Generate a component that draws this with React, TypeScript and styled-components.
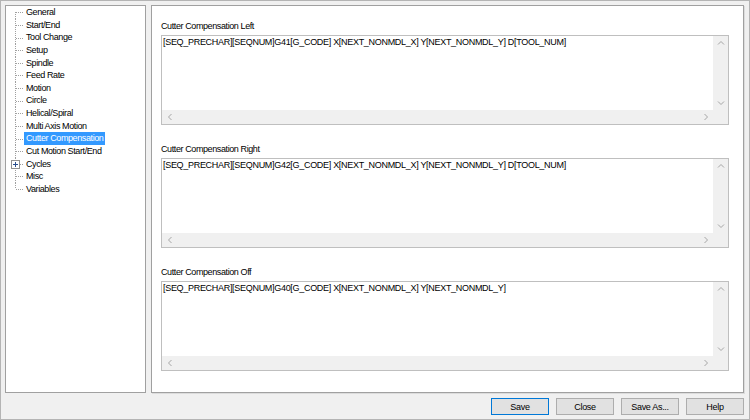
import styled, { createGlobalStyle, css } from "styled-components";

const GlobalStyle = createGlobalStyle`
  * {
    box-sizing: border-box;
  }
  body {
    margin: 0;
    background: #f0f0f0;
    font-family: "Liberation Sans", Arial, sans-serif;
    font-size: 9px;
    color: #000;
  }
`;

type TTreeItem = {
  label: string;
  expandable?: boolean;
};

const treeItems: TTreeItem[] = [
  { label: "General" },
  { label: "Start/End" },
  { label: "Tool Change" },
  { label: "Setup" },
  { label: "Spindle" },
  { label: "Feed Rate" },
  { label: "Motion" },
  { label: "Circle" },
  { label: "Helical/Spiral" },
  { label: "Multi Axis Motion" },
  { label: "Cutter Compensation" },
  { label: "Cut Motion Start/End" },
  { label: "Cycles", expandable: true },
  { label: "Misc" },
  { label: "Variables" },
];

const selectedItem = "Cutter Compensation";

const groups = [
  {
    title: "Cutter Compensation Left",
    code: "[SEQ_PRECHAR][SEQNUM]G41[G_CODE] X[NEXT_NONMDL_X] Y[NEXT_NONMDL_Y] D[TOOL_NUM]",
  },
  {
    title: "Cutter Compensation Right",
    code: "[SEQ_PRECHAR][SEQNUM]G42[G_CODE] X[NEXT_NONMDL_X] Y[NEXT_NONMDL_Y] D[TOOL_NUM]",
  },
  {
    title: "Cutter Compensation Off",
    code: "[SEQ_PRECHAR][SEQNUM]G40[G_CODE] X[NEXT_NONMDL_X] Y[NEXT_NONMDL_Y]",
  },
];

const Chevron = ({ dir }: { dir: "up" | "down" | "left" | "right" }) => {
  const rot = { up: 0, right: 90, down: 180, left: 270 }[dir];
  return (
    <svg width="8" height="8" viewBox="0 0 8 8">
      <polyline
        points="1,5.5 4,2.5 7,5.5"
        fill="none"
        stroke="#a6a6a6"
        strokeWidth="1"
        transform={`rotate(${rot} 4 4)`}
      />
    </svg>
  );
};

const PlusBox = () => (
  <Expander>
    <svg width="7" height="7" viewBox="0 0 7 7">
      <path d="M1 3.5h5M3.5 1v5" stroke="#2a4f8f" strokeWidth="1" />
    </svg>
  </Expander>
);

const App = () => {
  return (
    <>
      <GlobalStyle />
      <Window>
        <Main>
          <TreePanel>
            {treeItems.map((item, i) => (
              <TreeRow key={item.label}>
                <Guide $first={i === 0} $last={i === treeItems.length - 1}>
                  {item.expandable && <PlusBox />}
                </Guide>
                <TreeLabel $selected={item.label === selectedItem}>
                  {item.label}
                </TreeLabel>
              </TreeRow>
            ))}
          </TreePanel>
          <Content>
            {groups.map((g) => (
              <Group key={g.title}>
                <GroupLabel>{g.title}</GroupLabel>
                <CodeBox>
                  <CodeRow>
                    <CodeText>{g.code}</CodeText>
                    <VScroll>
                      <ArrowCell>
                        <Chevron dir="up" />
                      </ArrowCell>
                      <ArrowCell>
                        <Chevron dir="down" />
                      </ArrowCell>
                    </VScroll>
                  </CodeRow>
                  <HScrollRow>
                    <HScroll>
                      <ArrowCell>
                        <Chevron dir="left" />
                      </ArrowCell>
                      <ArrowCell>
                        <Chevron dir="right" />
                      </ArrowCell>
                    </HScroll>
                    <Corner />
                  </HScrollRow>
                </CodeBox>
              </Group>
            ))}
          </Content>
        </Main>
        <ButtonBar>
          <Button $default>Save</Button>
          <Button>Close</Button>
          <Button>Save As...</Button>
          <Button>Help</Button>
        </ButtonBar>
      </Window>
    </>
  );
};

export default App;

const dotsV = css`
  background-image: repeating-linear-gradient(
    to bottom,
    #a0a0a0 0 1px,
    transparent 1px 2px
  );
`;

const dotsH = css`
  background-image: repeating-linear-gradient(
    to right,
    #a0a0a0 0 1px,
    transparent 1px 2px
  );
`;

const Window = styled.div`
  width: 750px;
  height: 420px;
  border: 1px solid #b4b4b4;
  padding: 4px 5px 4px 4px;
  display: flex;
  flex-direction: column;
  background: #f0f0f0;
`;

const Main = styled.div`
  display: flex;
  gap: 5px;
  height: 388px;
`;

const TreePanel = styled.ul`
  list-style: none;
  margin: 0;
  padding: 0;
  width: 141px;
  flex: none;
  background: #fff;
  border: 1px solid #a0a0a0;
  letter-spacing: -0.4px;
`;

const TreeRow = styled.li`
  display: flex;
  height: 12.64px;
  align-items: stretch;
`;

const Guide = styled.span<{ $first?: boolean; $last?: boolean }>`
  position: relative;
  width: 18px;
  flex: none;

  &::before {
    content: "";
    position: absolute;
    left: 9px;
    width: 1px;
    top: ${({ $first }) => ($first ? "50%" : "0")};
    bottom: ${({ $last }) => ($last ? "50%" : "0")};
    ${dotsV}
  }

  &::after {
    content: "";
    position: absolute;
    left: 10px;
    width: 8px;
    height: 1px;
    top: 50%;
    ${dotsH}
  }
`;

const Expander = styled.span`
  position: absolute;
  left: 5px;
  top: 50%;
  width: 9px;
  height: 9px;
  margin-top: -4px;
  border: 1px solid #919191;
  background: #fff;
  z-index: 1;
  display: flex;
  align-items: center;
  justify-content: center;
`;

const TreeLabel = styled.span<{ $selected?: boolean }>`
  padding: 0 2px;
  line-height: 12.64px;
  white-space: nowrap;
  background: ${({ $selected }) => ($selected ? "#3399ff" : "transparent")};
  color: ${({ $selected }) => ($selected ? "#fff" : "#000")};
`;

const Content = styled.div`
  flex: 1;
  background: #fff;
  border: 1px solid #a0a0a0;
  box-shadow: 1px 1px 0 #dcdcdc;
  padding: 14px 14px 0 9px;
  display: flex;
  flex-direction: column;
  gap: 18px;
`;

const Group = styled.div`
  display: flex;
  flex-direction: column;
`;

const GroupLabel = styled.div`
  line-height: 12px;
  height: 12px;
  margin-bottom: 3px;
  letter-spacing: -0.4px;
  white-space: nowrap;
`;

const CodeBox = styled.div`
  height: 90px;
  border: 1px solid #bfbfbf;
  background: #fff;
  display: flex;
  flex-direction: column;
`;

const CodeRow = styled.div`
  flex: 1;
  display: flex;
  min-height: 0;
`;

const CodeText = styled.div`
  flex: 1;
  padding: 1px 1px;
  line-height: 11px;
  letter-spacing: -0.3px;
  white-space: nowrap;
  overflow: hidden;
`;

const VScroll = styled.div`
  width: 15px;
  flex: none;
  background: #f0f0f0;
  display: flex;
  flex-direction: column;
  justify-content: space-between;
`;

const HScrollRow = styled.div`
  height: 14px;
  flex: none;
  display: flex;
`;

const HScroll = styled.div`
  flex: 1;
  background: #f0f0f0;
  display: flex;
  justify-content: space-between;
`;

const ArrowCell = styled.span`
  width: 15px;
  height: 14px;
  display: flex;
  align-items: center;
  justify-content: center;
`;

const Corner = styled.div`
  width: 15px;
  background: #f0f0f0;
`;

const ButtonBar = styled.div`
  margin-top: 5px;
  display: flex;
  justify-content: flex-end;
  gap: 7px;
`;

const Button = styled.button<{ $default?: boolean }>`
  width: 58px;
  height: 17px;
  padding: 0;
  font-family: inherit;
  font-size: 9px;
  letter-spacing: -0.3px;
  color: #000;
  background: #e1e1e1;
  border: 1px solid ${({ $default }) => ($default ? "#0078d7" : "#adadad")};
  border-radius: 0;
`;
